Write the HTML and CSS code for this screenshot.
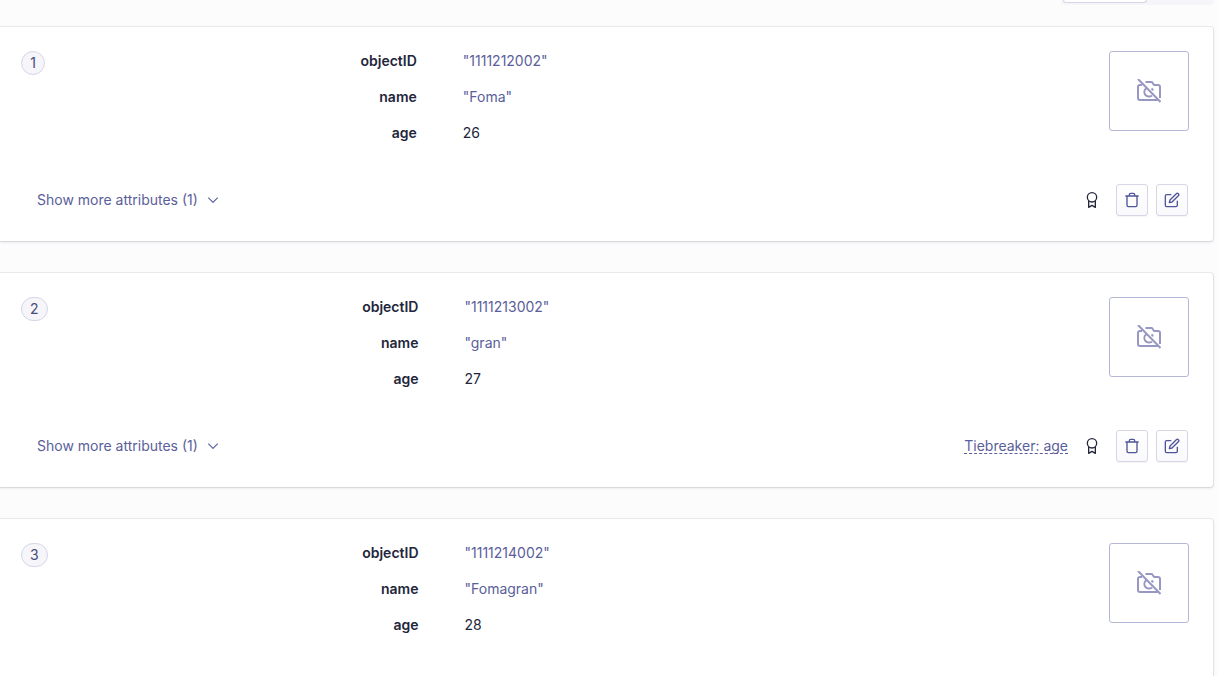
FILE: index.html
```
<!DOCTYPE html>
<html lang="en">
<head>
  <meta charset="UTF-8" />
  <title>Browse records</title>
  <link rel="stylesheet" href="styles.css">
</head>
<body>
  <!-- Shared icons -->
  <svg class="icon-defs" aria-hidden="true">
    <symbol id="icon-camera-off" viewBox="0 0 24 24">
      <path d="M1 0l22.500 23M20.500 21H3a2 2 0 0 1-2-2V8a2 2 0 0 1 2-2h2M8.500 3H15l2 3h4a2 2 0 0 1 2 2v11M9 9.500a4.500 4.500 0 1 0 6 7M14.500 9.500a4.500 4.500 0 0 1 1.500 2" />
    </symbol>
    <symbol id="icon-award" viewBox="0 0 24 24">
      <circle cx="12" cy="8" r="7" />
      <path d="M7 13.500V23l5-3 5 3v-9.500" />
    </symbol>
    <symbol id="icon-trash" viewBox="0 0 24 24">
      <path d="M2 6h20M19.500 6v14a2 2 0 0 1-2 2h-11a2 2 0 0 1-2-2V6M8 6V4a2 2 0 0 1 2-2h4a2 2 0 0 1 2 2v2" />
    </symbol>
    <symbol id="icon-edit" viewBox="0 0 24 24">
      <path d="M11 4H4a2 2 0 0 0-2 2v14a2 2 0 0 0 2 2h14a2 2 0 0 0 2-2v-7" />
      <path d="M18.500 2.500a2.120 2.120 0 0 1 3 3L12 15l-4 1 1-4z" />
    </symbol>
    <symbol id="icon-chevron" viewBox="0 0 24 24">
      <path d="M4 8l8 8 8-8" />
    </symbol>
  </svg>

  <div class="toolbar">
    <div class="view-switch">
      <button class="view-option active" type="button" aria-label="List view"></button>
      <button class="view-option" type="button" aria-label="Table view"></button>
    </div>
  </div>

  <main class="records">
    <article class="card">
      <div class="card-body">
        <span class="rank">1</span>
        <dl class="attributes">
          <dt>objectID</dt><dd class="string">"1111212002"</dd>
          <dt>name</dt><dd class="string">"Foma"</dd>
          <dt>age</dt><dd>26</dd>
        </dl>
        <div class="thumb"><svg><use href="#icon-camera-off" /></svg></div>
      </div>
      <div class="card-footer">
        <button class="show-more" type="button">Show more attributes (1) <svg><use href="#icon-chevron" /></svg></button>
        <div class="actions">
          <svg class="award"><use href="#icon-award" /></svg>
          <button class="icon-button" type="button" aria-label="Delete"><svg><use href="#icon-trash" /></svg></button>
          <button class="icon-button" type="button" aria-label="Edit"><svg><use href="#icon-edit" /></svg></button>
        </div>
      </div>
    </article>

    <article class="card">
      <div class="card-body">
        <span class="rank">2</span>
        <dl class="attributes">
          <dt>objectID</dt><dd class="string">"1111213002"</dd>
          <dt>name</dt><dd class="string">"gran"</dd>
          <dt>age</dt><dd>27</dd>
        </dl>
        <div class="thumb"><svg><use href="#icon-camera-off" /></svg></div>
      </div>
      <div class="card-footer">
        <button class="show-more" type="button">Show more attributes (1) <svg><use href="#icon-chevron" /></svg></button>
        <div class="actions">
          <span class="tiebreaker">Tiebreaker: age</span>
          <svg class="award"><use href="#icon-award" /></svg>
          <button class="icon-button" type="button" aria-label="Delete"><svg><use href="#icon-trash" /></svg></button>
          <button class="icon-button" type="button" aria-label="Edit"><svg><use href="#icon-edit" /></svg></button>
        </div>
      </div>
    </article>

    <article class="card">
      <div class="card-body">
        <span class="rank">3</span>
        <dl class="attributes">
          <dt>objectID</dt><dd class="string">"1111214002"</dd>
          <dt>name</dt><dd class="string">"Fomagran"</dd>
          <dt>age</dt><dd>28</dd>
        </dl>
        <div class="thumb"><svg><use href="#icon-camera-off" /></svg></div>
      </div>
    </article>
  </main>
</body>
</html>
```
FILE: styles.css
```
/* ===== Page ===== */
* {
  box-sizing: border-box;
}

body {
  margin: 0;
  height: 100vh;
  overflow: hidden;
  background: #fcfcfd;
  font-family: Inter, sans-serif;
  font-size: 14px;
  line-height: 20px;
  color: #23263b;
}

svg {
  display: block;
  width: 16px;
  height: 16px;
  fill: none;
  stroke: currentColor;
  stroke-width: 2;
  stroke-linejoin: round;
}

.icon-defs {
  display: none;
}

button {
  font: inherit;
  color: #5a5e9a;
  cursor: pointer;
}

/* ===== View switch ===== */
.toolbar {
  display: flex;
  justify-content: flex-end;
  padding-right: 4px;
}

.view-switch {
  display: flex;
  width: 153px;
  height: 5px;
  padding: 0 2px 2px;
  background: #f5f5fa;
  border-radius: 0 0 4px 4px;
}

.view-option {
  flex: 1;
  border: none;
  background: none;
  padding: 0;
}

.view-option.active {
  flex: 0 0 84px;
  background: #fff;
  border: 1px solid #d6d6e7;
  border-top: none;
  border-radius: 0 0 3px 3px;
}

/* ===== Record cards ===== */
.records {
  display: flex;
  flex-direction: column;
  gap: 32px;
  padding: 22px 5px 0 0;
}

.card {
  padding: 24px 24px 25px 21px;
  background: #fff;
  border-radius: 0 3px 3px 0;
  box-shadow: 0 0 0 1px rgba(35, 38, 59, 0.07), 0 1px 3px rgba(35, 38, 59, 0.15);
}

.card-body {
  display: flex;
  align-items: flex-start;
  min-height: 133px;
}

.rank {
  min-width: 24px;
  padding: 1px 8px;
  margin-right: 12px;
  background: #f5f5fa;
  border: 1px solid #d6d6e7;
  border-radius: 12px;
  text-align: center;
  color: #484c7a;
}

.attributes {
  flex: 1;
  display: grid;
  grid-template-columns: 35% 1fr;
  gap: 16px 46px;
  margin: 0 24px 0 0;
}

.attributes dt {
  font-weight: 600;
  text-align: right;
}

.attributes dd {
  margin: 0;
}

.attributes .string {
  color: #5a5e9a;
}

.thumb {
  display: flex;
  align-items: center;
  justify-content: center;
  width: 80px;
  height: 80px;
  border: 1px solid #b6b7d5;
  border-radius: 3px;
  color: #9698c3;
}

.thumb svg {
  width: 24px;
  height: 24px;
  overflow: visible;
}

/* ===== Card footer ===== */
.card-footer {
  display: flex;
  justify-content: space-between;
  align-items: center;
  padding-right: 1px;
}

.show-more {
  display: flex;
  align-items: center;
  gap: 8px;
  padding: 6px 16px;
  border: none;
  background: none;
}

.show-more svg {
  width: 14px;
  height: 14px;
}

.actions {
  display: flex;
  align-items: center;
  gap: 8px;
}

.tiebreaker {
  margin-right: 8px;
  line-height: 14px;
  color: #5a5e9a;
  border-bottom: 1px dashed #5a5e9a;
}

.award {
  margin-right: 8px;
}

.icon-button {
  display: flex;
  align-items: center;
  justify-content: center;
  width: 32px;
  height: 32px;
  padding: 0;
  background: linear-gradient(#fff, #f9f9fc);
  border: 1px solid #d6d6e7;
  border-radius: 3px;
  box-shadow: 0 1px 1px rgba(35, 38, 59, 0.05);
  color: #50549a;
}
```
